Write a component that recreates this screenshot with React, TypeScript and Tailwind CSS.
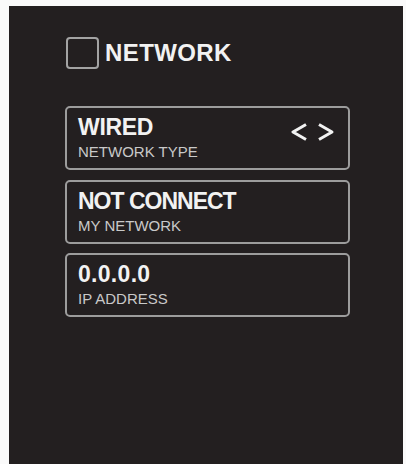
const font = { fontFamily: '"Liberation Sans", Arial, sans-serif' }

interface Field {
  value: string
  label: string
  tracking: string
  arrows?: boolean
}

const fields: Field[] = [
  { value: 'WIRED', label: 'NETWORK TYPE', tracking: 'tracking-[-0.3px]', arrows: true },
  { value: 'NOT CONNECT', label: 'MY NETWORK', tracking: 'tracking-[-1px]' },
  { value: '0.0.0.0', label: 'IP ADDRESS', tracking: 'tracking-[0.3px]' },
]

function Arrows() {
  return (
    <svg width="44" height="18" viewBox="0 0 44 18" className="absolute right-[13px] top-[15px]">
      <polyline points="15,1.5 2,9 15,16.5" fill="none" stroke="#f2f2f2" strokeWidth="3" strokeLinejoin="round" />
      <polyline points="28,1.5 41,9 28,16.5" fill="none" stroke="#f2f2f2" strokeWidth="3" strokeLinejoin="round" />
    </svg>
  )
}

export default function App() {
  return (
    <div className="w-[406px] h-[464px] bg-[#fafafa] overflow-hidden" style={font}>
      <div className="ml-[9px] mt-[6px] w-[394px] h-[458px] bg-[#231f20] pt-[31px] pl-[56px]">
        {/* Header */}
        <div className="flex items-center gap-[6px] pl-[1px]">
          <div className="w-[33px] h-[32px] border-2 border-[#a3a3a3] rounded-[4px]" />
          <span className="text-[24px] leading-[24px] font-bold text-[#f2f2f2] tracking-[0.4px]">NETWORK</span>
        </div>

        {/* Fields */}
        <div className="mt-[37px] flex flex-col gap-[9.5px] w-[285px]">
          {fields.map((f) => (
            <div
              key={f.label}
              className="relative h-[64px] border-2 border-[#9c9c9c] rounded-[5px] pt-[8px] pl-[11px]"
            >
              <div className={`text-[23px] leading-[23px] font-bold text-[#f2f2f2] ${f.tracking}`}>{f.value}</div>
              <div className="mt-[5px] text-[15px] leading-[15px] text-[#c9c9c9]">{f.label}</div>
              {f.arrows && <Arrows />}
            </div>
          ))}
        </div>
      </div>
    </div>
  )
}
